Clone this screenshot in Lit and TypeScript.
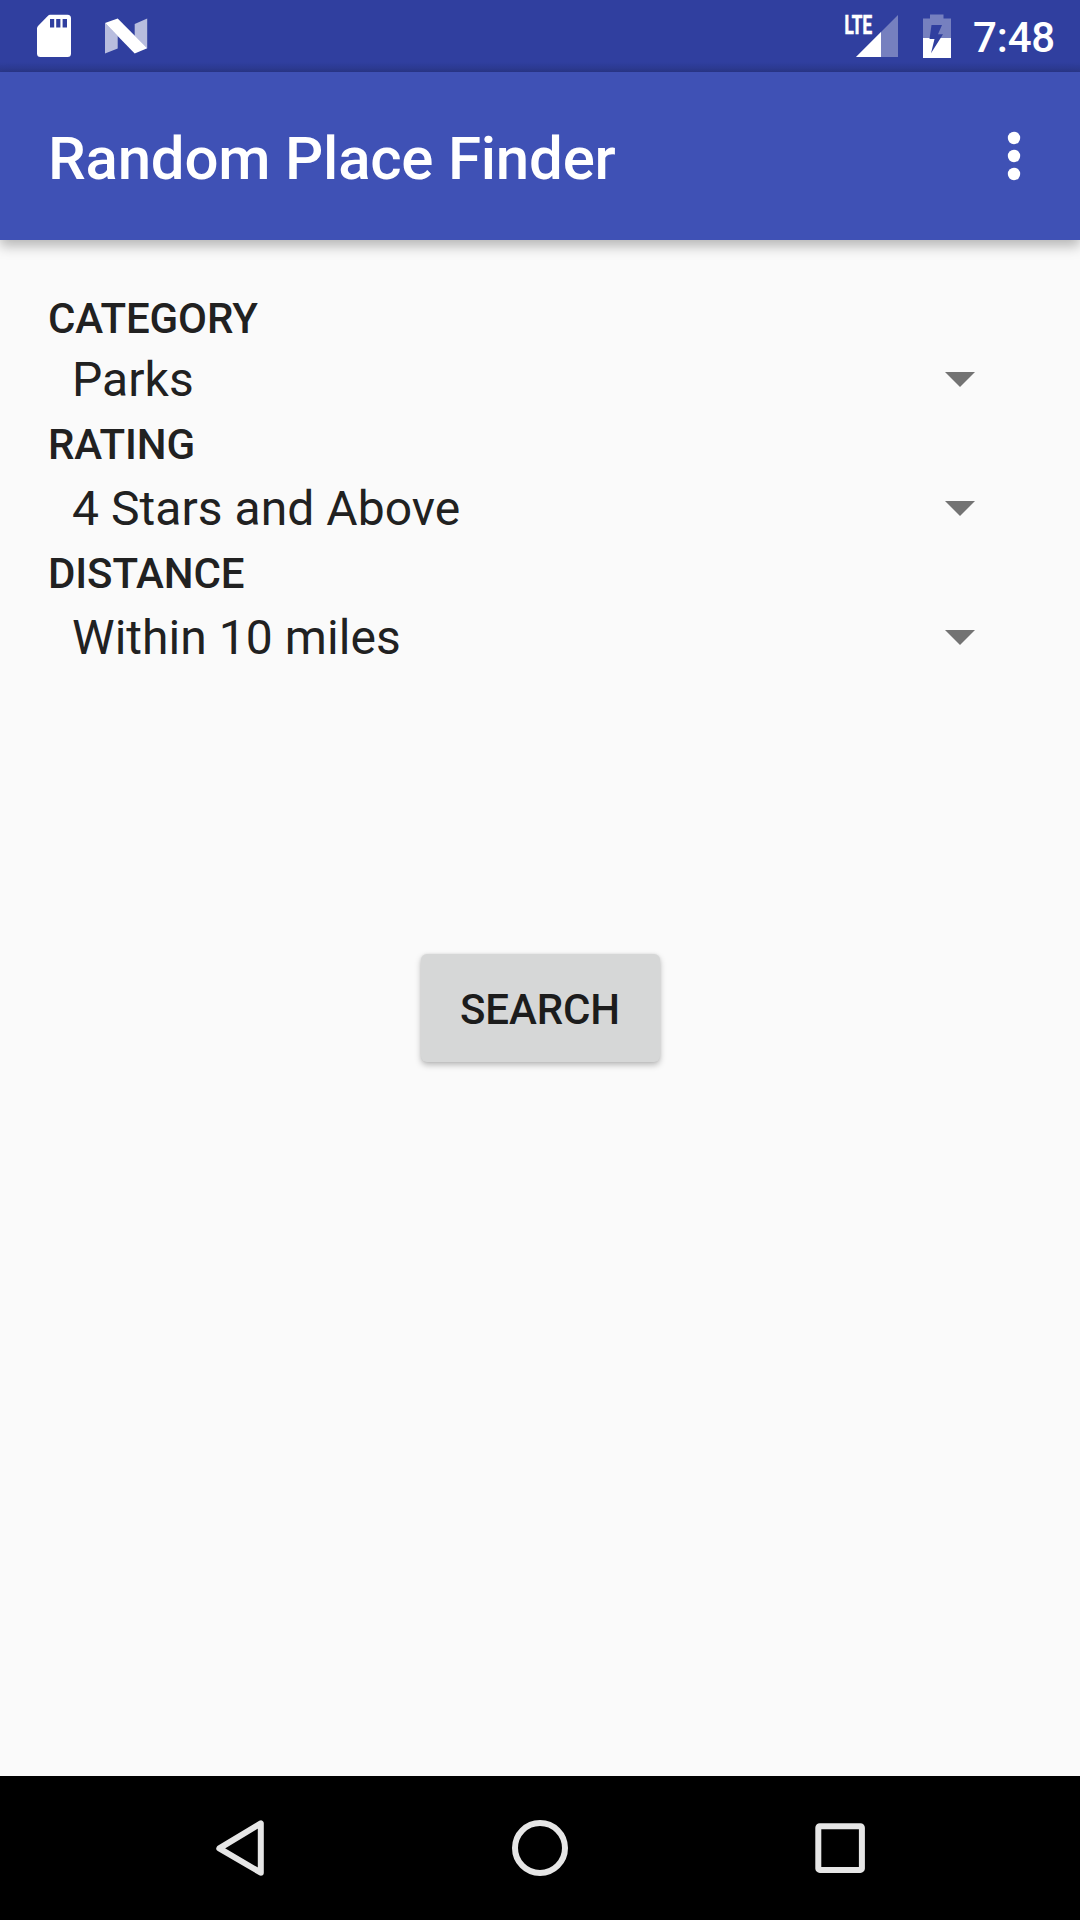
import { LitElement, html, css } from "lit";
import { customElement, property } from "lit/decorators.js";

@customElement("status-bar")
class StatusBar extends LitElement {
  static styles = css`
    :host { display: block; }
    .bar {
      height: 72px;
      box-sizing: border-box;
      display: flex;
      justify-content: space-between;
      padding: 0 25px 0 36px;
      background: linear-gradient(to bottom, #303f9f 0, #303f9f 62px, #2d3b94 68px, #2a378a 72px);
    }
    .side { display: flex; }
    .left { gap: 32px; }
    svg { display: block; height: 72px; }
    .signal { margin-right: 24px; }
    .battery { margin-right: 22px; }
    .lte { font: 700 26px Roboto, sans-serif; fill: #fff; stroke: #fff; stroke-width: 0.7px; }
    .time { font: 500 42px/70px Roboto, sans-serif; letter-spacing: -0.2px; color: #fff; padding-top: 3px; height: 69px; }
  `;
  render() {
    return html`
      <div class="bar">
        <div class="side left">
          <svg width="36" viewBox="36 0 36 72">
            <path fill="#fff" fill-rule="evenodd" d="M50 14.700H67.500Q71 14.700 71 18.200V53.500Q71 57 67.500 57H40.500Q37 57 37 53.500V28.500Q37 27 38 26L48 15.700Q49 14.700 50 14.700ZM50 19V27.500H54.200V19ZM56.200 19V27.500H60.400V19ZM62.600 19V27.500H67V19Z"/>
          </svg>
          <svg width="44" viewBox="104 0 44 72">
            <path fill="#fff" fill-opacity=".66" d="M105 23L117.700 36V48.500L105 53.500ZM134.700 24L147.200 18.500V48.500L134.700 36Z"/>
            <path fill="#fff" d="M105 23L117.700 18.500L147.200 48.300L134.700 53.500Z"/>
          </svg>
        </div>
        <div class="side">
          <svg class="signal" width="55" viewBox="844 0 55 72">
            <path fill="#fff" fill-opacity=".34" d="M898 15V57H856Z"/>
            <path fill="#fff" d="M881 32V57H856Z"/>
            <text class="lte" x="844.500" y="33.800" textLength="27.500" lengthAdjust="spacingAndGlyphs">LTE</text>
          </svg>
          <svg class="battery" width="28" viewBox="923 0 28 72">
            <path fill="#fff" fill-opacity=".34" d="M923 38V18.500H930V14.500H943.500V18.500H951V38Z"/>
            <path fill="#fff" d="M923 38H951V58H923Z"/>
            <path fill="#303f9f" d="M931.500 25H942L938 34.300H943L931 53.300L934.500 39H929.500Z"/>
          </svg>
          <span class="time">7:48</span>
        </div>
      </div>
    `;
  }
}

@customElement("title-bar")
class TitleBar extends LitElement {
  static styles = css`
    :host { display: block; }
    .bar {
      height: 168px;
      box-sizing: border-box;
      display: flex;
      align-items: center;
      justify-content: space-between;
      padding: 0 59px 0 48px;
      background: #3f51b5;
      color: #fff;
      box-shadow: 0 6px 12px rgba(0, 0, 0, 0.28);
    }
    .title { margin: 0; padding-top: 6px; font: 500 60px/72px Roboto, sans-serif; letter-spacing: -0.22px; }
    svg { display: block; }
  `;
  render() {
    return html`
      <header class="bar">
        <h1 class="title">Random Place Finder</h1>
        <svg width="14" height="50" viewBox="0 0 14 50" fill="#fff">
          <circle cx="7" cy="7" r="6.200"/><circle cx="7" cy="25" r="6.200"/><circle cx="7" cy="43" r="6.200"/>
        </svg>
      </header>
    `;
  }
}

@customElement("spinner-field")
class SpinnerField extends LitElement {
  @property() label = "";
  @property() value = "";
  static styles = css`
    :host { display: block; color: #212121; }
    .label { height: var(--label-height, 57px); font: 500 42px/57px Roboto, sans-serif; letter-spacing: -0.1px; }
    .row {
      height: 72px;
      display: flex;
      align-items: center;
      justify-content: space-between;
      padding: 0 21px 0 24px;
    }
    .value { font: 400 48px/72px Roboto, sans-serif; letter-spacing: 0.05px; }
    svg { display: block; margin-bottom: 1px; }
  `;
  render() {
    return html`
      <div class="label">${this.label}</div>
      <div class="row">
        <span class="value">${this.value}</span>
        <svg width="30" height="15" viewBox="0 0 30 15"><path fill="#737373" d="M0 0H30L15 15Z"/></svg>
      </div>
    `;
  }
}

@customElement("nav-bar")
class NavBar extends LitElement {
  static styles = css`
    :host { display: block; }
    .bar {
      height: 144px;
      display: flex;
      align-items: center;
      justify-content: center;
      gap: 240px;
      background: #000;
    }
    svg { display: block; fill: none; stroke: #e6e6e6; stroke-width: 6; stroke-linejoin: round; }
  `;
  render() {
    return html`
      <nav class="bar">
        <svg width="60" height="60" viewBox="210 1818 60 60"><path d="M260.800 1823.300V1872.700L219.300 1848.400Z"/></svg>
        <svg width="60" height="60" viewBox="0 0 60 60"><circle cx="30" cy="30" r="25"/></svg>
        <svg width="60" height="60" viewBox="0 0 60 60"><rect x="8.300" y="8.300" width="43.600" height="43.600" rx="1.500"/></svg>
      </nav>
    `;
  }
}

@customElement("app-root")
class AppRoot extends LitElement {
  static styles = css`
    :host { display: block; }
    .screen {
      width: 1080px;
      height: 1920px;
      display: flex;
      flex-direction: column;
      background: #fafafa;
    }
    .content {
      flex: 1;
      display: flex;
      flex-direction: column;
      align-items: center;
      padding: 50px 84px 0 48px;
    }
    .fields { width: 100%; display: flex; flex-direction: column; }
    .fields spinner-field:first-child { --label-height: 54px; }
    .search {
      width: 239px;
      height: 108px;
      margin: 280px 0 0 36px;
      padding: 3px 0 0;
      border: 0;
      border-radius: 6px;
      background: #d6d7d7;
      color: #1c1c1c;
      font: 500 42px/50px Roboto, sans-serif;
      letter-spacing: -0.1px;
      box-shadow: 0 3px 6px rgba(0, 0, 0, 0.26), 0 0 3px rgba(0, 0, 0, 0.08);
    }
  `;
  fields = [
    { label: "CATEGORY", value: "Parks" },
    { label: "RATING", value: "4 Stars and Above" },
    { label: "DISTANCE", value: "Within 10 miles" },
  ];
  render() {
    return html`
      <div class="screen">
        <status-bar></status-bar>
        <title-bar></title-bar>
        <main class="content">
          <div class="fields">
            ${this.fields.map((f) => html`<spinner-field .label=${f.label} .value=${f.value}></spinner-field>`)}
          </div>
          <button class="search">SEARCH</button>
        </main>
        <nav-bar></nav-bar>
      </div>
    `;
  }
}
